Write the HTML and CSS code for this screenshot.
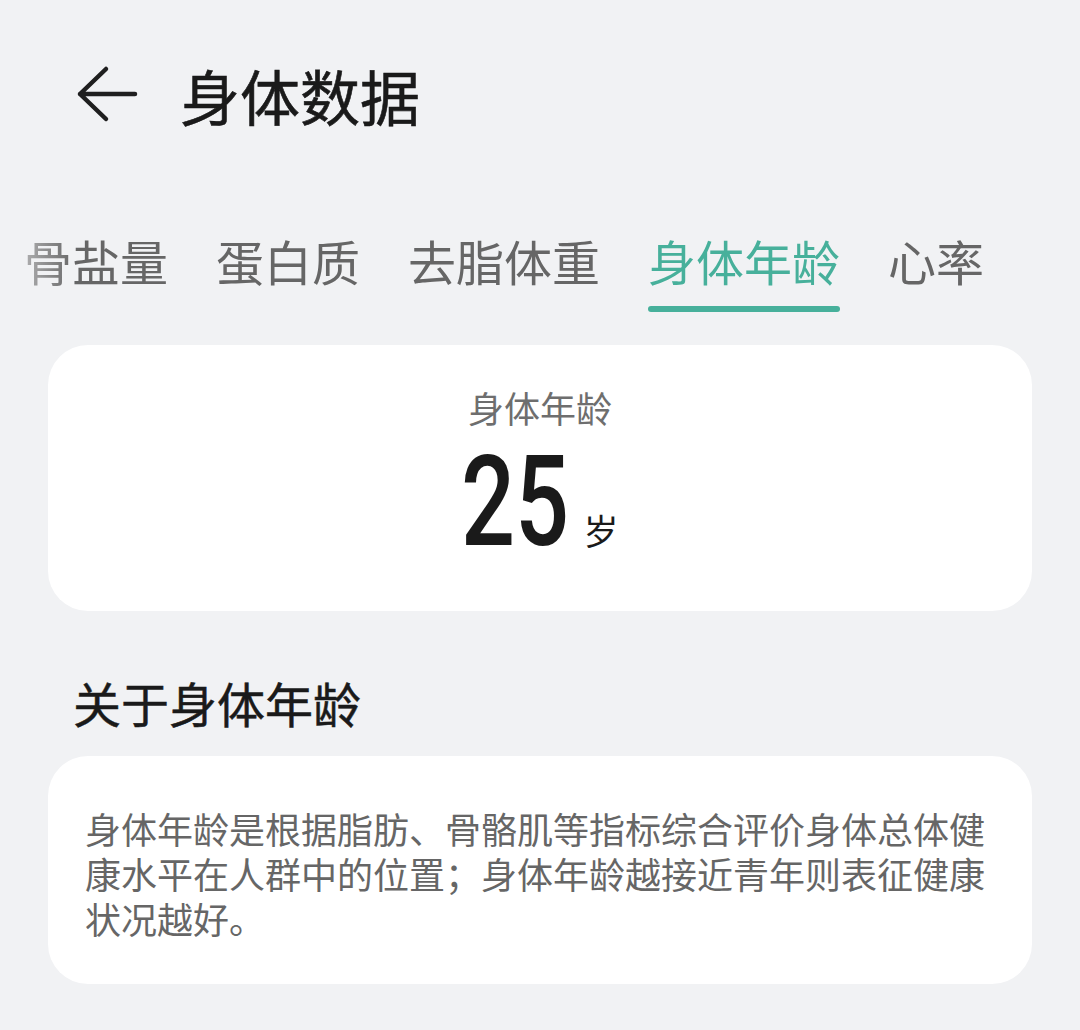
FILE: index.html
```html
<!DOCTYPE html>
<html lang="zh-CN">
<head>
<meta charset="utf-8">
<title>身体数据</title>
<link rel="stylesheet" href="styles.css">
</head>
<body>
<div class="page">
  <header class="header">
    <svg class="back" width="64" height="60" viewBox="0 0 64 60">
      <path d="M59 29 H4 M30 4 L4 29 L30 54" fill="none" stroke="#1f1f1f" stroke-width="4.5" stroke-linecap="round" stroke-linejoin="round"/>
    </svg>
    <h1 class="title">身体数据</h1>
  </header>

  <nav class="tabs">
    <div class="tab"><span class="tab-label">骨盐量</span><span class="tab-bar"></span></div>
    <div class="tab"><span class="tab-label">蛋白质</span><span class="tab-bar"></span></div>
    <div class="tab"><span class="tab-label">去脂体重</span><span class="tab-bar"></span></div>
    <div class="tab active"><span class="tab-label">身体年龄</span><span class="tab-bar"></span></div>
    <div class="tab"><span class="tab-label">心率</span><span class="tab-bar"></span></div>
  </nav>

  <section class="card summary">
    <div class="summary-label">身体年龄</div>
    <div class="summary-value">
      <span class="num">25</span>
      <span class="unit">岁</span>
    </div>
  </section>

  <h2 class="section-title">关于身体年龄</h2>

  <section class="card info">
    <p class="info-text">身体年龄是根据脂肪、骨骼肌等指标综合评价身体总体健康水平在人群中的位置；身体年龄越接近青年则表征健康状况越好。</p>
  </section>
</div>
</body>
</html>
```

FILE: styles.css
```css
* { box-sizing: border-box; }

html, body {
  margin: 0;
  padding: 0;
  background: #f1f2f4;
}

body {
  font-family: "Noto Sans CJK SC", "Noto Sans", sans-serif;
  color: #1a1a1a;
  width: 1080px;
  height: 1030px;
  overflow: hidden;
}

.header {
  display: flex;
  align-items: center;
  height: 190px;
  padding-left: 76px;
  gap: 40px;
}

.back { display: block; flex: none; }

.title {
  margin: 0;
  font-size: 60px;
  font-weight: 400;
  line-height: 80px;
  color: #1a1a1a;
  -webkit-text-stroke: 0.6px #1a1a1a;
}

.tabs {
  display: flex;
  gap: 48px;
  padding-left: 24px;
  margin-top: 40px;
  -webkit-mask-image: linear-gradient(to right, rgba(0,0,0,0.25) 0px, #000 75px);
  mask-image: linear-gradient(to right, rgba(0,0,0,0.25) 0px, #000 75px);
}

.tab {
  display: flex;
  flex-direction: column;
  align-items: stretch;
  flex: none;
}

.tab-label {
  font-size: 48px;
  line-height: 60px;
  color: #666666;
  white-space: nowrap;
}

.tab-bar {
  display: block;
  margin-top: 16px;
  height: 6px;
  border-radius: 3px;
  background: transparent;
}

.tab.active .tab-label { color: #47b09b; }
.tab.active .tab-bar { background: #47b09b; }

.card {
  background: #ffffff;
  border-radius: 40px;
  margin: 0 48px;
}

.summary {
  margin-top: 33px;
  height: 266px;
  padding-top: 40px;
  display: flex;
  flex-direction: column;
  align-items: center;
}

.summary-label {
  font-size: 36px;
  line-height: 44px;
  color: #6e6e6e;
}

.summary-value {
  margin-top: 8px;
  display: flex;
  align-items: baseline;
  line-height: 130px;
  height: 130px;
}

.num {
  display: inline-block;
  width: 107px;
  font-family: Roboto, "Liberation Sans", sans-serif;
  font-size: 126px;
  font-weight: 500;
  color: #1a1a1a;
  transform: scaleX(0.755);
  transform-origin: left center;
  white-space: nowrap;
}

.unit {
  margin-left: 15px;
  font-size: 35px;
  color: #1a1a1a;
  line-height: 1;
}

.section-title {
  margin: 61px 0 24px;
  padding-left: 73px;
  font-size: 48px;
  font-weight: 400;
  line-height: 60px;
  color: #1a1a1a;
  -webkit-text-stroke: 0.5px #1a1a1a;
}

.info {
  height: 228px;
  padding: 50px 37px 43px;
}

.info-text {
  margin: 0;
  font-size: 36px;
  line-height: 45px;
  color: #666666;
}
```
